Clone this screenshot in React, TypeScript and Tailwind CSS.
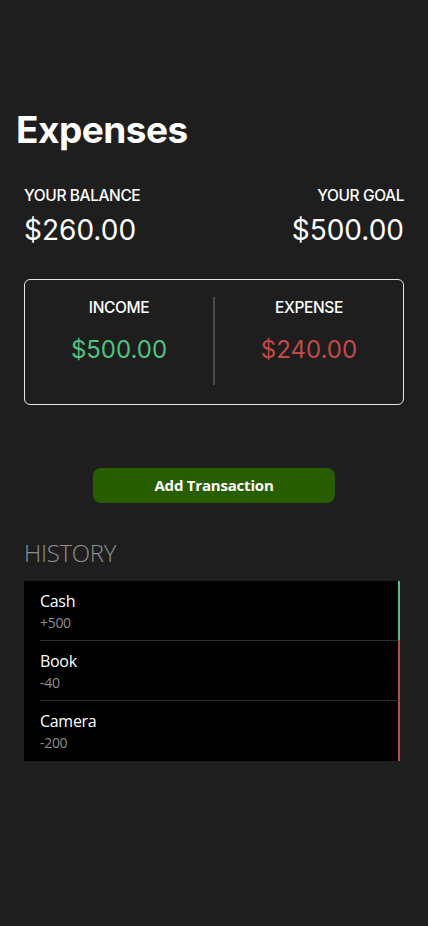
const history = [
  { text: "Cash", amount: 500 },
  { text: "Book", amount: -40 },
  { text: "Camera", amount: -200 },
];

const App = () => {
  return (
    <div className="min-h-[926px] w-full bg-[#1e1e1e] text-white font-['Inter',sans-serif]">
      <div className="pt-[104px] px-4">
        <h1 className="text-[37px] font-bold leading-[52px] tracking-[-0.5px] text-white">
          Expenses
        </h1>

        <div className="px-2 mt-[30px]">
          <div className="flex justify-between">
            <div>
              <h4 className="text-[15.5px] font-medium uppercase leading-5 tracking-[-0.4px]">
                Your Balance
              </h4>
              <p className="text-[28px] leading-9 mt-[6px]">$260.00</p>
            </div>
            <div className="text-right">
              <h4 className="text-[15.5px] font-medium uppercase leading-5 tracking-[-0.4px]">
                Your Goal
              </h4>
              <p className="text-[28px] leading-9 mt-[6px]">$500.00</p>
            </div>
          </div>

          <div className="mt-[31px] flex h-[126px] rounded-md border border-[#e5e5e5] pt-[17px] pb-[18px]">
            <div className="flex-1 text-center pt-[1px]">
              <h4 className="text-[15.5px] font-medium uppercase leading-5 tracking-[-0.4px]">
                Income
              </h4>
              <p className="text-[24px] leading-8 mt-[16px] text-[#4fc27f]">
                $500.00
              </p>
            </div>
            <div className="w-[2px] bg-[#4a4a4a] mb-[1px]" />
            <div className="flex-1 text-center pt-[1px]">
              <h4 className="text-[15.5px] font-medium uppercase leading-5 tracking-[-0.4px]">
                Expense
              </h4>
              <p className="text-[24px] leading-8 mt-[16px] text-[#c14a48]">
                $240.00
              </p>
            </div>
          </div>

          <div className="mt-[63px] flex justify-center">
            <button className="w-[242px] h-[35px] rounded-lg bg-[#285e00] text-[15px] font-bold text-white font-['Open_Sans',sans-serif] tracking-[-0.2px]">
              Add Transaction
            </button>
          </div>

          <h3 className="mt-[34px] text-[24px] leading-8 text-[#8e8e8e] font-['Open_Sans',sans-serif] font-light tracking-[-0.3px]">
            HISTORY
          </h3>

          <ul className="mt-[12px] mr-[4px] bg-black pl-4 font-['Open_Sans',sans-serif]">
            {history.map((item, i) => (
              <li
                key={item.text}
                className={`h-[60px] pt-[8px] border-r-2 ${
                  item.amount > 0 ? "border-r-[#4fc27f]" : "border-r-[#c14a48]"
                } ${i < history.length - 1 ? "border-b border-b-[#2c2c2c]" : ""}`}
              >
                <div className="text-[16px] leading-6 text-white tracking-[-0.3px]">
                  {item.text}
                </div>
                <div className="text-[14px] leading-5 text-[#8e8e8e] tracking-[-0.3px]">
                  {item.amount > 0 ? `+${item.amount}` : item.amount}
                </div>
              </li>
            ))}
          </ul>
        </div>
      </div>
    </div>
  );
};

export default App;
